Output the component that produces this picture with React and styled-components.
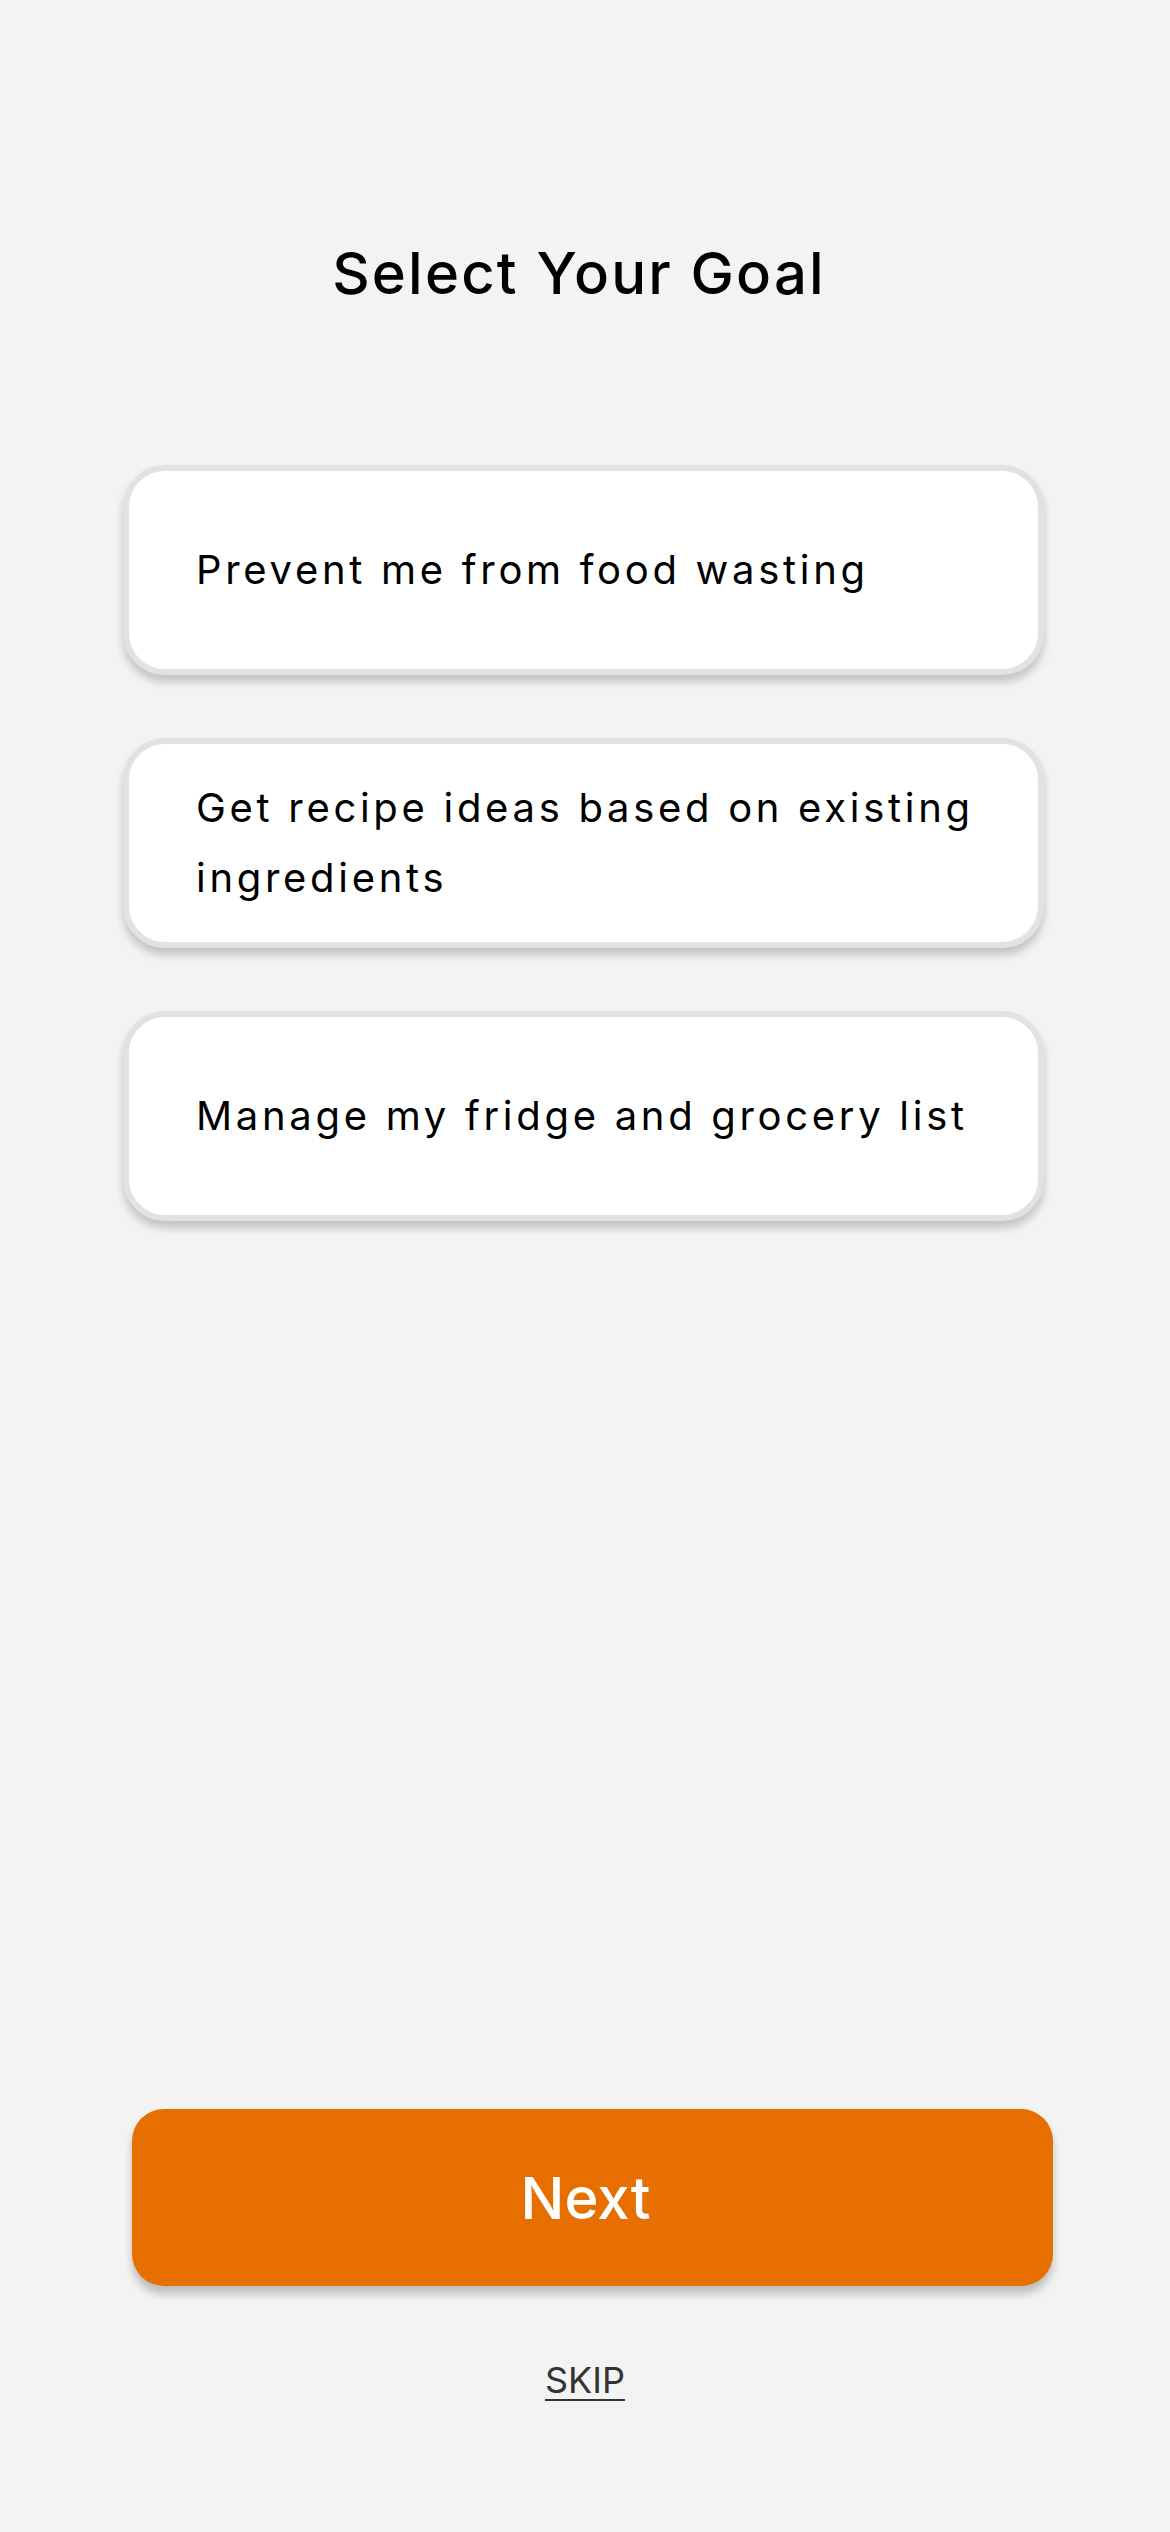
import React from "react";
import styled, { createGlobalStyle } from "styled-components";

const GlobalStyle = createGlobalStyle`
  html, body {
    margin: 0;
    padding: 0;
    background-color: #f3f3f3;
  }
  * {
    box-sizing: border-box;
  }
`;

const Screen = styled.div`
  min-height: 100vh;
  display: flex;
  flex-direction: column;
  padding: 237px 0 130px;
  font-family: Inter, "Open Sans", sans-serif;
  color: #000;
`;

const Title = styled.h1`
  margin: 0;
  text-align: center;
  font-size: 58px;
  line-height: 72px;
  font-weight: 500;
  letter-spacing: 2.2px;
  padding-right: 12px;
`;

const GoalList = styled.div`
  display: flex;
  flex-direction: column;
  gap: 63px;
  margin: 156px 126px 0 123px;
`;

const GoalCard = styled.button`
  display: flex;
  align-items: center;
  height: 210px;
  padding: 0 40px 0 67px;
  border: 6px solid ${(p) => (p.$active ? "#e66f00" : "#e2e2e2")};
  border-radius: 42px;
  background: #fff;
  box-shadow: 0 7px 8px rgba(0, 0, 0, 0.2);
  text-align: left;
  font-family: inherit;
  font-size: 40px;
  line-height: 70px;
  letter-spacing: 3.7px;
  color: #000;
  cursor: pointer;
`;

const Spacer = styled.div`
  flex: 1;
`;

const Footer = styled.div`
  display: flex;
  flex-direction: column;
  align-items: center;
  gap: 72px;
`;

const NextButton = styled.button`
  width: 921px;
  height: 177px;
  margin-left: 15px;
  padding: 0 14px 0 0;
  border: none;
  border-radius: 32px;
  background-color: #e66f00;
  box-shadow: 0 8px 8px rgba(0, 0, 0, 0.22);
  color: #fff;
  font-family: inherit;
  font-size: 58px;
  font-weight: 500;
  cursor: pointer;
`;

const SkipLink = styled.a`
  font-size: 36px;
  line-height: 44px;
  color: #333;
  text-decoration: underline;
  text-decoration-thickness: 2px;
  text-underline-offset: 6px;
  cursor: pointer;
`;

const goals = [
  "Prevent me from food wasting",
  "Get recipe ideas based on existing ingredients",
  "Manage my fridge and grocery list",
];

export default function App() {
  const [selected, setSelected] = React.useState(null);

  return (
    <>
      <GlobalStyle />
      <Screen>
        <Title>Select Your Goal</Title>
        <GoalList>
          {goals.map((goal, i) => (
            <GoalCard
              key={goal}
              $active={selected === i}
              onClick={() => setSelected(i)}
            >
              {goal}
            </GoalCard>
          ))}
        </GoalList>
        <Spacer />
        <Footer>
          <NextButton>Next</NextButton>
          <SkipLink>SKIP</SkipLink>
        </Footer>
      </Screen>
    </>
  );
}
